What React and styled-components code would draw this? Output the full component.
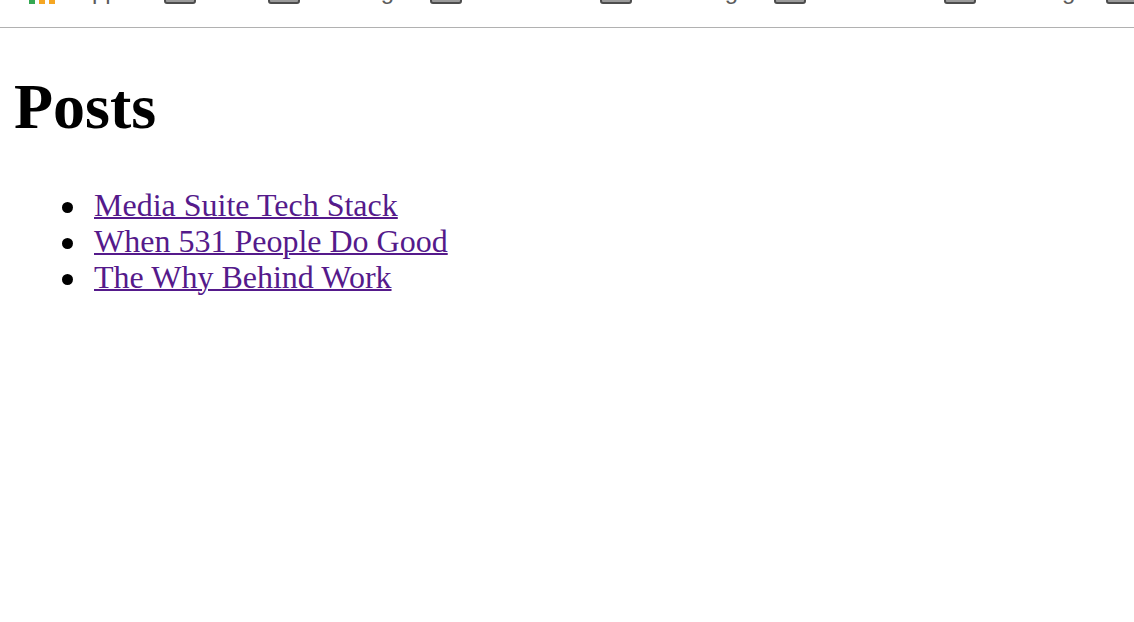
import React from "react";
import styled, { createGlobalStyle } from "styled-components";

const Global = createGlobalStyle`
  html, body { margin: 0; padding: 0; background: #fff; overflow: hidden; }
`;

const Page = styled.div`
  height: 622px;
  overflow: hidden;
  font-family: "Liberation Serif", "Times New Roman", serif;
  color: #000;
`;

const BookmarksBar = styled.nav`
  height: 28px;
  box-sizing: border-box;
  border-bottom: 1px solid #b1b1b1;
  overflow: hidden;
`;

const BookmarkRow = styled.div`
  display: flex;
  align-items: flex-end;
  height: 27px;
  margin-top: -23px;
  padding-left: 29px;
`;

const Bookmark = styled.div`
  flex: none;
  width: ${p => p.$w}px;
  display: flex;
  align-items: flex-end;
  gap: ${p => p.$gap}px;
`;

const Label = styled.span`
  font-family: "Liberation Sans", Arial, sans-serif;
  font-size: 24px;
  line-height: 27px;
  color: #5c5c5c;
  white-space: nowrap;
`;

const AppsIcon = styled.svg`
  display: block;
  width: 26px;
  height: 27px;
  flex: none;
`;

const Folder = styled.div`
  flex: none;
  box-sizing: border-box;
  width: 32px;
  height: 27px;
  background: #9a9a9a;
  border: 2px solid #4d4d4d;
  border-radius: 3px;
`;

const Content = styled.main`
  padding: 0 14px;
`;

const Title = styled.h1`
  margin: 43px 0 0;
  font-size: 64px;
  line-height: 72px;
  font-weight: 700;
`;

const PostList = styled.ul`
  list-style: none;
  margin: 44px 0 0;
  padding: 0 0 0 80px;
  font-size: 32px;
  line-height: 36px;
`;

const PostItem = styled.li`
  position: relative;
  &::before {
    content: "";
    position: absolute;
    left: -32px;
    top: 15px;
    width: 11px;
    height: 11px;
    border-radius: 50%;
    background: #000;
  }
`;

const PostLink = styled.a`
  color: #551a8b;
  text-decoration: underline;
  text-decoration-thickness: 2px;
`;

const posts = ["Media Suite Tech Stack", "When 531 People Do Good", "The Why Behind Work"];

const bookmarks = [
  { label: "Dev", width: 104 },
  { label: "Coding", width: 162 },
  { label: "Product", width: 170 },
  { label: "Cooking", width: 174 },
  { label: "Science", width: 170 },
  { label: "Hosting", width: 162 },
  { label: "", width: 32 },
];

export default function App() {
  return (
    <Page>
      <Global />
      <BookmarksBar>
        <BookmarkRow>
          <Bookmark $w={135} $gap={21}>
            <AppsIcon viewBox="0 0 26 27">
              <rect x="0" y="23" width="6" height="4" fill="#34a853" />
              <rect x="10" y="23" width="6" height="4" fill="#f5a623" />
              <rect x="20" y="23" width="6" height="4" fill="#f5a623" />
            </AppsIcon>
            <Label>Apps</Label>
          </Bookmark>
          {bookmarks.map(b => (
            <Bookmark key={b.label} $w={b.width} $gap={18}>
              <Folder />
              <Label>{b.label}</Label>
            </Bookmark>
          ))}
        </BookmarkRow>
      </BookmarksBar>
      <Content>
        <Title>Posts</Title>
        <PostList>
          {posts.map(p => (
            <PostItem key={p}>
              <PostLink href="#">{p}</PostLink>
            </PostItem>
          ))}
        </PostList>
      </Content>
    </Page>
  );
}
